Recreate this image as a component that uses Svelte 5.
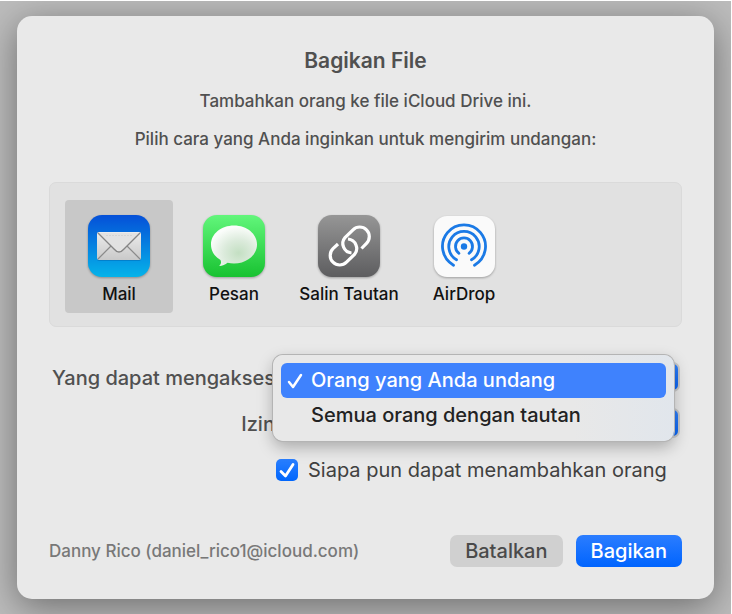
<script>
  let apps = [
    { id: 'mail', name: 'Mail' },
    { id: 'messages', name: 'Pesan' },
    { id: 'link', name: 'Salin Tautan' },
    { id: 'airdrop', name: 'AirDrop' },
  ];
  let accessOptions = ['Orang yang Anda undang', 'Semua orang dengan tautan'];
  let permissions = ['Dapat membuat perubahan', 'Hanya lihat'];

  let selectedApp = 'mail';
  let access = accessOptions[0];
  let permission = permissions[0];
  let anyoneCanAdd = true;
  let menuOpen = true;

  function chooseAccess(option) {
    access = option;
    menuOpen = false;
  }

  function openMenu(event) {
    event.preventDefault();
    menuOpen = true;
  }
</script>

<main>
  <form class="dialog" on:submit|preventDefault>
    <h1>Bagikan File</h1>
    <p>Tambahkan orang ke file iCloud Drive ini.</p>
    <p>Pilih cara yang Anda inginkan untuk mengirim undangan:</p>

    <div class="apps">
      {#each apps as app}
        <button
          type="button"
          class="app"
          class:selected={selectedApp === app.id}
          on:click={() => (selectedApp = app.id)}
        >
          <svg class="icon" viewBox="0 0 64 64" aria-hidden="true">
            {#if app.id === 'mail'}
              <defs>
                <linearGradient id="mail-bg" x2="0" y2="1">
                  <stop offset="0" stop-color="#0550d8" />
                  <stop offset="1" stop-color="#05b3e9" />
                </linearGradient>
                <linearGradient id="mail-paper" x2="0" y2="1">
                  <stop offset="0" stop-color="#ececec" />
                  <stop offset="1" stop-color="#c9c9c9" />
                </linearGradient>
              </defs>
              <rect x="1" y="1" width="62" height="62" rx="14" fill="url(#mail-bg)" />
              <rect x="10" y="19" width="44" height="28" rx="2" fill="#00529c" opacity="0.35" />
              <rect x="10" y="18" width="44" height="28" rx="2" fill="url(#mail-paper)" />
              <path d="M11 45 L24 32 M53 45 L40 32" stroke="#8b8b8b" stroke-width="1.2" />
              <path d="M11 19 L27 35 Q32 41 37 35 L53 19" fill="#e2e2e2" stroke="#858585" stroke-width="1.3" />
              <path d="M19 21.5 H45" stroke="#cfcfcf" stroke-width="0.7" stroke-dasharray="2 1" />
            {:else if app.id === 'messages'}
              <defs>
                <linearGradient id="msg-bg" x2="0" y2="1">
                  <stop offset="0" stop-color="#62f67b" />
                  <stop offset="1" stop-color="#18c231" />
                </linearGradient>
                <radialGradient id="msg-bubble" cx="0.6" cy="0.68" r="0.65">
                  <stop offset="0" stop-color="#c3dfc2" />
                  <stop offset="0.5" stop-color="#dcebdc" />
                  <stop offset="1" stop-color="#fbfdfb" />
                </radialGradient>
              </defs>
              <rect x="1" y="1" width="62" height="62" rx="14" fill="url(#msg-bg)" />
              <path
                d="M32 11.5 C19 11.5 9 20 9 30.5 C9 37 12.5 42.5 18.5 46 C19.5 48.5 19 50.5 17 52 C20.5 52 23.5 50.5 25.5 48.8 C27.5 49.3 29.7 49.5 32 49.5 C45 49.5 55 41 55 30.5 C55 20 45 11.5 32 11.5 Z"
                fill="url(#msg-bubble)"
              />
            {:else if app.id === 'link'}
              <defs>
                <linearGradient id="link-bg" x2="0" y2="1">
                  <stop offset="0" stop-color="#969696" />
                  <stop offset="1" stop-color="#5d5d5f" />
                </linearGradient>
              </defs>
              <rect x="1" y="1" width="62" height="62" rx="14" fill="url(#link-bg)" />
              <g fill="none" stroke="#fff" stroke-width="3.2">
                <path d="M44.5 34.5 L49.5 29.3 A9.5 9.5 0 0 0 36 15.8 L28 23.5 A9.5 9.5 0 0 0 34.5 39" />
                <path d="M21 30 L16 34.7 A9.5 9.5 0 0 0 29.5 48.2 L37.5 40.5 A9.5 9.5 0 0 0 31 25" />
              </g>
            {:else}
              <rect x="2" y="2" width="61" height="61" rx="13" fill="#fafafa" />
              <circle cx="32" cy="32.5" r="3.2" fill="#1b7ae6" />
              <g fill="none" stroke="#1b7ae6" stroke-width="2.8" stroke-linecap="round">
                <path d="M27 39.3 A8.5 8.5 0 1 1 37 39.3" />
                <path d="M24.5 45.8 A15.2 15.2 0 1 1 39.5 45.8" />
                <path d="M21.5 51.2 A21.5 21.5 0 1 1 42.5 51.2" />
              </g>
            {/if}
          </svg>
          <span>{app.name}</span>
        </button>
      {/each}
    </div>

    <div class="row">
      <label for="access">Yang dapat mengakses:</label>
      <div class="control">
        <select id="access" bind:value={access} on:mousedown={openMenu}>
          {#each accessOptions as option}
            <option>{option}</option>
          {/each}
        </select>
        {#if menuOpen}
          <div class="menu" role="listbox" aria-label="Yang dapat mengakses">
            {#each accessOptions as option}
              <button
                type="button"
                role="option"
                class="item"
                class:active={access === option}
                aria-selected={access === option}
                on:click={() => chooseAccess(option)}
              >
                <svg class="check" viewBox="0 0 18 18" aria-hidden="true">
                  {#if access === option}
                    <path d="M3 10 L7 15 L15 3" />
                  {/if}
                </svg>
                {option}
              </button>
            {/each}
          </div>
        {/if}
      </div>
    </div>

    <div class="row">
      <label for="permission">Izin:</label>
      <div class="control">
        <select id="permission" bind:value={permission}>
          {#each permissions as option}
            <option>{option}</option>
          {/each}
        </select>
      </div>
    </div>

    <label class="anyone">
      <input type="checkbox" bind:checked={anyoneCanAdd} />
      Siapa pun dapat menambahkan orang
    </label>

    <footer>
      <span class="account">Danny Rico (daniel_rico1@icloud.com)</span>
      <button type="button" class="btn">Batalkan</button>
      <button type="submit" class="btn primary">Bagikan</button>
    </footer>
  </form>
</main>

<style>
  :global(body) {
    background: #fff;
  }

  main {
    display: flex;
    align-items: flex-start;
    box-sizing: border-box;
    min-height: calc(100vh - 1px);
    margin: 1px 1px 0 0;
    padding: 15px 17px;
    overflow: hidden;
    background: #bcbcbc;
    font-family: Inter, "Liberation Sans", sans-serif;
    font-weight: 500;
    color: #505050;
  }

  .dialog {
    flex: 1;
    min-width: 0;
    padding: 31px 32px 32px;
    border-radius: 15px;
    background: #e9e9e9;
    box-shadow: 0 8px 36px rgba(0, 0, 0, 0.42);
  }

  h1 {
    margin: 0;
    font-size: 21px;
    line-height: 28px;
    font-weight: 600;
    text-align: center;
  }

  p {
    margin: 14px 0 0;
    font-size: 17px;
    line-height: 24px;
    text-align: center;
  }

  button {
    border: 0;
    font-family: inherit;
    font-weight: inherit;
  }

  .apps {
    display: flex;
    gap: 7px;
    margin: 31px 0 35px;
    padding: 17px 15px 13px;
    border: 1px solid #dadada;
    border-radius: 7px;
    background: #e1e1e1;
  }

  .app {
    display: flex;
    flex-direction: column;
    align-items: center;
    gap: 4px;
    width: 108px;
    padding: 14px 0 7px;
    border-radius: 4px;
    background: none;
    color: #111;
    font-size: 17px;
    line-height: 24px;
    white-space: nowrap;
  }

  .app.selected {
    background: #c8c8c8;
  }

  .icon {
    width: 64px;
    height: 64px;
    filter: drop-shadow(0 1px 1px rgba(0, 0, 0, 0.3));
  }

  .row {
    display: flex;
    gap: 4px;
    margin-bottom: 14px;
    font-size: 20px;
    line-height: 32px;
  }

  .row label {
    width: 232px;
    text-align: right;
    white-space: nowrap;
  }

  .control {
    position: relative;
    flex: 1;
    min-width: 0;
    margin-right: 2px;
  }

  select {
    appearance: none;
    display: block;
    width: 100%;
    height: 30px;
    padding: 0 32px 0 10px;
    border: 2px solid #c9c9c9;
    border-radius: 7px;
    background: linear-gradient(#2f80fb, #0a66f5) right / 24px 100% no-repeat #fff;
    color: #333;
    font: inherit;
    line-height: 24px;
  }

  /* opens over its own select and the row below it */
  .menu {
    position: absolute;
    z-index: 1;
    top: -7px;
    left: -12px;
    right: 6px;
    padding: 8px;
    border-radius: 10px;
    background: linear-gradient(90deg, #e8e8e8 75%, #e1e6ec);
    box-shadow: 0 0 0 1px #b4b4b4, 0 6px 16px rgba(0, 0, 0, 0.28);
  }

  .item {
    display: flex;
    align-items: center;
    gap: 7px;
    width: 100%;
    padding: 0 5px;
    border-radius: 6px;
    background: none;
    color: #222;
    font-size: 20px;
    line-height: 35px;
    white-space: nowrap;
  }

  .item.active {
    background: #3f82fd;
    color: #fff;
  }

  .check {
    width: 18px;
    height: 18px;
    fill: none;
    stroke: #fff;
    stroke-width: 2.5;
    stroke-linecap: round;
    stroke-linejoin: round;
  }

  .anyone {
    display: flex;
    align-items: center;
    gap: 10px;
    margin-left: 227px;
    font-size: 20px;
    line-height: 32px;
    font-weight: 400;
    color: #404040;
    white-space: nowrap;
  }

  .anyone input {
    appearance: none;
    width: 22px;
    height: 22px;
    margin: 0;
    border-radius: 5px;
    background: #0a6cfb;
  }

  .anyone input:checked {
    background:
      url("data:image/svg+xml,%3Csvg xmlns='http://www.w3.org/2000/svg' viewBox='0 0 22 22'%3E%3Cpath d='M5 12.5 L9.5 17 L17 5.5' fill='none' stroke='white' stroke-width='2.8' stroke-linecap='round' stroke-linejoin='round'/%3E%3C/svg%3E"),
      linear-gradient(#2a7fff, #0066fc);
  }

  footer {
    display: flex;
    align-items: center;
    gap: 13px;
    margin-top: 49px;
  }

  .account {
    flex: 1;
    color: #787878;
    font-size: 17px;
    line-height: 24px;
    white-space: nowrap;
  }

  .btn {
    height: 32px;
    padding: 0 15px;
    border-radius: 7px;
    background: #d0d0d0;
    color: #4a4a4a;
    font-size: 20px;
    line-height: 32px;
  }

  .btn.primary {
    background: linear-gradient(#2b7dff, #0064fe);
    color: #fff;
  }
</style>
